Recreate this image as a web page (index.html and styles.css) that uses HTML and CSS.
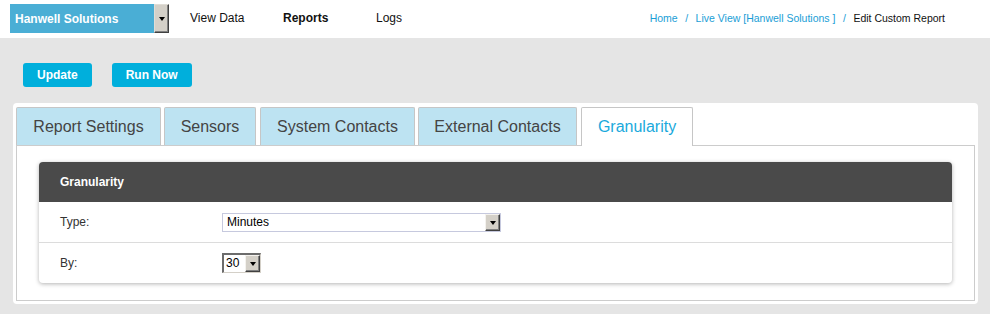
FILE: index.html
```html
<!DOCTYPE html>
<html>
<head>
<meta charset="utf-8">
<link rel="stylesheet" href="styles.css">
</head>
<body>
<header class="topbar">
  <div class="company">
    <span class="company-name">Hanwell Solutions</span>
    <span class="win-arrow company-arrow"><i class="tri"></i></span>
  </div>
  <nav class="nav">
    <a class="nav-item">View Data</a>
    <a class="nav-item active">Reports</a>
    <a class="nav-item">Logs</a>
  </nav>
  <div class="crumbs">
    <a class="crumb-link">Home</a><span class="sep">/</span><a class="crumb-link">Live View [Hanwell Solutions ]</a><span class="sep">/</span><span class="crumb-current">Edit Custom Report</span>
  </div>
</header>
<main class="main">
  <div class="actions">
    <button class="btn">Update</button>
    <button class="btn">Run Now</button>
  </div>
  <section class="panel">
    <div class="tabs">
      <div class="tab t1">Report Settings</div>
      <div class="tab t2">Sensors</div>
      <div class="tab t3">System Contacts</div>
      <div class="tab t4">External Contacts</div>
      <div class="tab t5 active">Granularity</div>
    </div>
    <div class="tab-body">
      <div class="box">
        <div class="box-head">Granularity</div>
        <div class="row">
          <span class="label">Type:</span>
          <div class="select select-wide"><span class="select-text">Minutes</span><span class="win-arrow"><i class="tri"></i></span></div>
        </div>
        <div class="row">
          <span class="label">By:</span>
          <div class="select select-small"><span class="select-text">30</span><span class="win-arrow"><i class="tri"></i></span></div>
        </div>
      </div>
    </div>
  </section>
</main>
</body>
</html>
```
FILE: styles.css
```css
* { box-sizing: border-box; }
html, body { margin: 0; padding: 0; }
body {
  background: #e5e5e5;
  font-family: "Liberation Sans", Arial, sans-serif;
  color: #222;
  width: 990px;
  height: 314px;
  overflow: hidden;
}
.topbar {
  height: 38px;
  background: #fff;
  display: flex;
  align-items: center;
}
.company {
  margin-left: 10px;
  display: flex;
  height: 29px;
  margin-top: -1px;
}
.company-name {
  width: 144px;
  background: #4aaed5;
  color: #fff;
  font-weight: bold;
  font-size: 12px;
  display: flex;
  align-items: center;
  padding-left: 5px;
}
.win-arrow {
  width: 15px;
  background: #d4d0c8;
  border-top: 1px solid #f4f2ee;
  border-left: 1px solid #f4f2ee;
  border-right: 1px solid #404040;
  border-bottom: 1px solid #404040;
  box-shadow: inset -1px -1px 0 #808080;
  display: flex;
  align-items: center;
  justify-content: center;
}
.company-arrow { border-color: #404040; border-top-color: #e0ddd6; border-left-color: #e0ddd6; }
.tri {
  width: 0; height: 0;
  border-left: 3.5px solid transparent;
  border-right: 3.5px solid transparent;
  border-top: 4px solid #000;
  margin-top: 1px;
}
.nav {
  display: flex;
  margin-left: 21px;
  margin-top: -2px;
}
.nav-item {
  width: 93px;
  font-size: 12px;
  color: #111;
}
.nav-item.active { font-weight: bold; }
.crumbs {
  margin-left: auto;
  margin-right: 45px;
  font-size: 10.5px;
  margin-top: -2px;
}
.crumb-link { color: #1a9ed6; }
.sep { color: #1a9ed6; margin: 0 7.5px; }
.crumb-current { color: #111; }

.main { padding: 25px 12px 10px 13px; }
.actions { display: flex; gap: 20px; margin-left: 10px; }
.btn {
  height: 24px;
  padding: 0 14px;
  border: none;
  border-radius: 3px;
  background: #00afdc;
  color: #fff;
  font-family: "Liberation Sans", Arial, sans-serif;
  font-weight: bold;
  font-size: 12px;
}
.panel {
  margin-top: 16px;
  background: #fff;
  border-radius: 4px;
  padding: 4px 3px 3px 3px;
}
.tabs {
  display: flex;
  height: 38px;
  position: relative;
  z-index: 1;
}
.tab {
  height: 38px;
  background: #bde3f2;
  border: 1px solid #c6c6c6;
  border-bottom: none;
  border-radius: 2px 2px 0 0;
  font-size: 16px;
  color: #444;
  display: flex;
  align-items: center;
  justify-content: center;
  margin-right: 3px;
}
.t1 { width: 145px; }
.t2 { width: 92px; margin-right: 4px; }
.t3 { width: 155px; }
.t4 { width: 159px; margin-right: 4px; }
.t5 { width: 112px; }
.tab.active {
  background: #fff;
  color: #1aa9dc;
  height: 39px;
}
.tab-body {
  border: 1px solid #cccccc;
  height: 156px;
  padding: 16px 22px;
}
.box {
  border-radius: 4px;
  box-shadow: 0 1px 4px rgba(0,0,0,0.3);
  background: #fff;
}
.box-head {
  height: 40px;
  background: #4a4a4a;
  border-radius: 4px 4px 0 0;
  color: #fff;
  font-weight: bold;
  font-size: 12px;
  display: flex;
  align-items: center;
  padding-left: 21px;
}
.row {
  height: 40px;
  display: flex;
  align-items: center;
  padding-left: 21px;
  font-size: 12px;
  color: #333;
}
.row + .row { border-top: 1px solid #dcdcdc; height: 41px; }
.label { width: 162px; }
.select {
  display: flex;
  align-items: stretch;
  background: #fff;
  color: #000;
  font-size: 12px;
}
.select-wide {
  width: 279px;
  height: 19px;
  border: 1px solid #c6c9de;
  padding: 0;
}
.select-wide .select-text { flex: 1; padding-left: 4px; line-height: 17px; }
.select-small {
  width: 39px;
  height: 20px;
  border-top: 2px solid #6c6c6c;
  border-left: 2px solid #6c6c6c;
  border-right: 1px solid #d4d0c8;
  border-bottom: 1px solid #d4d0c8;
}
.select-small .select-text { flex: 1; padding-left: 2px; line-height: 17px; }
```
